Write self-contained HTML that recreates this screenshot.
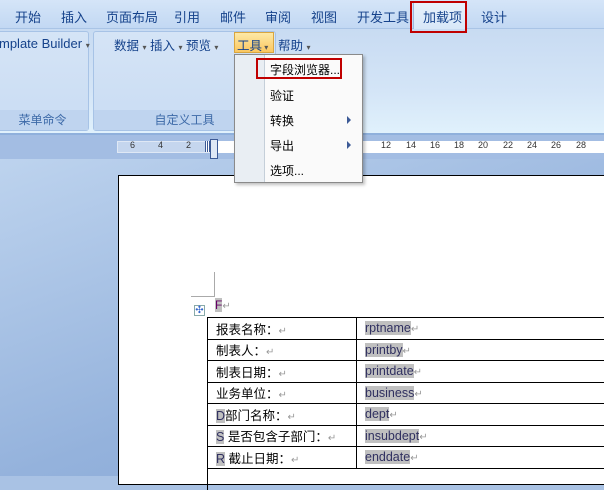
<!DOCTYPE html>
<html><head><meta charset="utf-8"><style>
*{margin:0;padding:0;box-sizing:border-box}
body{width:604px;height:476px;overflow:hidden;position:relative;font-family:"Liberation Sans","Noto Sans CJK SC",sans-serif;font-size:12px;background:#a9c2e4}
.abs{position:absolute}
#tabs{left:0;top:0;width:604px;height:29px;background:linear-gradient(#d5e5f8,#c2d8f3);border-bottom:1px solid #a9c4e6}
.tab{position:absolute;top:7px;color:#15428b;font-size:13px}
#ribbon{left:0;top:29px;width:604px;height:104px;background:linear-gradient(#c8dbf2,#d4e5f7 60%,#e0f1fc)}
.grp{position:absolute;top:31px;height:100px;border:1px solid #a7c3e6;border-radius:3px;background:linear-gradient(#d5e4f6,#c9dcf3)}
.grpl{position:absolute;left:0;right:0;bottom:0;height:20px;background:#bfd4ef;color:#3d6aa8;text-align:center;font-size:12px;line-height:20px}
#ruleband{left:0;top:133px;width:604px;height:26px;background:#a3bde3;border-top:2px solid #8fb0dc}
#docbg{left:0;top:159px;width:604px;height:317px;background:linear-gradient(160deg,#bdd3ee,#94b2dc 60%,#86a6d4)}
#page{left:118px;top:175px;width:490px;height:310px;background:#fff;border:1px solid #000}
td{border:1px solid #000;height:21.5px;padding:0 0 0 8px;font-size:12.5px;color:#000;white-space:nowrap}
.h{background:#c0c0c0;color:#303060}
.m{color:#999;font-size:10px}
#menu{left:234px;top:54px;width:129px;height:129px;background:#fafafa;border:1px solid #8a8a8a;box-shadow:2px 2px 3px rgba(0,0,0,.25)}
.mi{position:absolute;left:35px;font-size:12px;color:#000}
.arr{position:absolute;left:112px;width:0;height:0;border-left:4px solid #3c5a96;border-top:4px solid transparent;border-bottom:4px solid transparent}
</style></head><body>
<div id="tabs" class="abs">
<span class="tab" style="left:15px">开始</span>
<span class="tab" style="left:61px">插入</span>
<span class="tab" style="left:106px">页面布局</span>
<span class="tab" style="left:174px">引用</span>
<span class="tab" style="left:220px">邮件</span>
<span class="tab" style="left:265px">审阅</span>
<span class="tab" style="left:311px">视图</span>
<span class="tab" style="left:357px">开发工具</span>
<span class="tab" style="left:481px">设计</span>
</div>
<div class="abs" style="left:413px;top:2px;width:53px;height:30px;background:linear-gradient(#e8f1fb,#d6e6f8);border:1px solid #9bb8df;border-bottom:none"></div>
<div id="ribbon" class="abs"></div>
<div class="abs tab" style="left:423px;top:7px;color:#15428b;font-size:13px">加载项</div>
<div class="abs" style="left:410px;top:1px;width:57px;height:32px;border:2px solid #c00000"></div>
<div class="grp" style="left:-4px;width:93px"><div style="position:absolute;top:4px;left:2px;color:#15428b;font-size:13px;white-space:nowrap">mplate Builder <span style="font-size:8px;color:#555">▾</span></div><div class="grpl">菜单命令</div></div>
<div class="grp" style="left:93px;width:183px"><div class="grpl">自定义工具</div></div>
<div class="abs" style="left:114px;top:35px;color:#15428b;font-size:12.5px;white-space:nowrap">数据 <span style="font-size:8px;color:#555">▾</span> 插入 <span style="font-size:8px;color:#555">▾</span> 预览 <span style="font-size:8px;color:#555">▾</span></div>
<div class="abs" style="left:234px;top:32px;width:40px;height:21px;background:linear-gradient(#fde9a6,#fbc760);border:1px solid #d9a640;color:#15428b;font-size:12.5px;padding:2px 0 0 2px">工具<span style="font-size:8px;color:#555"> ▾</span></div>
<div class="abs" style="left:278px;top:35px;color:#15428b;font-size:12.5px">帮助 <span style="font-size:8px;color:#555">▾</span></div>
<div id="ruleband" class="abs"></div>
<div class="abs" style="left:117px;top:141px;width:487px;height:12px;background:#c5d6ee;border:1px solid #dfe8f5"></div>
<div class="abs" style="left:215px;top:141px;width:389px;height:12px;background:#fff"></div>
<div class="abs" style="left:106px;top:140px;font-size:9px;color:#333;white-space:nowrap"><span style="position:absolute;left:24px">6</span><span style="position:absolute;left:52px">4</span><span style="position:absolute;left:80px">2</span><span style="position:absolute;left:275px">12</span><span style="position:absolute;left:300px">14</span><span style="position:absolute;left:324px">16</span><span style="position:absolute;left:348px">18</span><span style="position:absolute;left:372px">20</span><span style="position:absolute;left:397px">22</span><span style="position:absolute;left:421px">24</span><span style="position:absolute;left:445px">26</span><span style="position:absolute;left:470px">28</span></div>
<div class="abs" style="left:205px;top:141px;width:7px;height:11px;background:repeating-linear-gradient(90deg,#3c5a96 0 1px,#fff 1px 2px)"></div>
<div class="abs" style="left:210px;top:139px;width:8px;height:20px;border:1px solid #3c5a96;background:#dfe8f5"></div>
<div id="docbg" class="abs"></div>
<div id="page" class="abs"></div>
<div class="abs" style="left:191px;top:296px;width:23px;height:1px;background:#aaa"></div>
<div class="abs" style="left:214px;top:272px;width:1px;height:25px;background:#aaa"></div>
<div class="abs" style="left:194px;top:305px;width:11px;height:11px;border:1px solid #8aa;background:#fff;color:#3366cc;font-size:10px;line-height:9px;text-align:center">✣</div>
<div class="abs" style="left:215px;top:298px;font-size:12px"><span class="h" style="color:#606">F</span><span class="m">↵</span></div>
<table class="abs" style="left:207px;top:317px;border-collapse:collapse;width:410px">
<tr><td style="width:149px">报表名称：<span class="m">↵</span></td><td><span class="h">rptname</span><span class="m">↵</span></td></tr>
<tr><td>制表人：<span class="m">↵</span></td><td><span class="h">printby</span><span class="m">↵</span></td></tr>
<tr><td>制表日期：<span class="m">↵</span></td><td><span class="h">printdate</span><span class="m">↵</span></td></tr>
<tr><td>业务单位：<span class="m">↵</span></td><td><span class="h">business</span><span class="m">↵</span></td></tr>
<tr><td><span class="h">D</span>部门名称：<span class="m">↵</span></td><td><span class="h">dept</span><span class="m">↵</span></td></tr>
<tr><td><span class="h">S</span> 是否包含子部门：<span class="m">↵</span></td><td><span class="h">insubdept</span><span class="m">↵</span></td></tr>
<tr><td><span class="h">R</span> 截止日期：<span class="m">↵</span></td><td><span class="h">enddate</span><span class="m">↵</span></td></tr>
<tr><td colspan="2" style="border-right:none;border-bottom:none"></td></tr>
</table>
<div id="menu" class="abs">
<div class="abs" style="left:0;top:0;width:30px;height:127px;background:#e9eef3;border-right:1px solid #c5cfd9"></div>
<div class="mi" style="top:6px">字段浏览器...</div>
<div class="abs" style="left:21px;top:3px;width:86px;height:21px;border:2px solid #c00000"></div>
<div class="mi" style="top:32px">验证</div>
<div class="mi" style="top:57px">转换</div><div class="arr" style="top:61px"></div>
<div class="mi" style="top:82px">导出</div><div class="arr" style="top:86px"></div>
<div class="mi" style="top:107px">选项...</div>
</div>
</body></html>
